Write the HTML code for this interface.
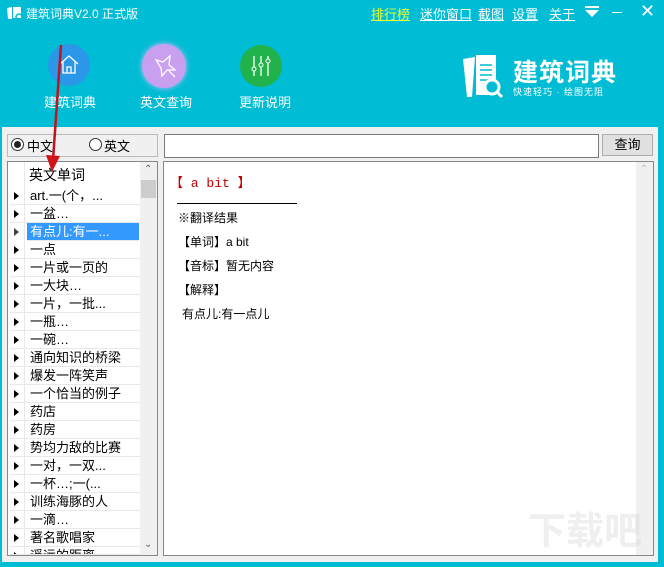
<!DOCTYPE html>
<html style="width:664px;height:567px;overflow:hidden"><head><meta charset="utf-8"><style>
*{margin:0;padding:0;box-sizing:border-box}
body{width:664px;height:567px;overflow:hidden;background:#00bcd4;font-family:"Liberation Sans","Noto Sans CJK SC",sans-serif;position:relative}
.abs{position:absolute}
.t{color:#fff;font-size:13px}
.lnk{color:#fff;font-size:13px;text-decoration:underline}
.lower{left:2px;top:127px;width:656px;height:435px;background:#f0f0f0}
.box{border:1px solid #a0a0a0;background:#fff}
.row{position:absolute;left:10px;width:130px;height:18px;border-bottom:1px solid #e8e8e8;font-size:13px;line-height:18px}
.row i{position:absolute;left:4px;top:5px;width:0;height:0;border-top:4px solid transparent;border-bottom:4px solid transparent;border-left:5px solid #000}
.row span{position:absolute;left:20px;white-space:nowrap}
.r{font-size:12px;position:absolute;left:178px}
</style></head><body>
<svg class="abs" style="left:6px;top:5px" width="18" height="16"><path d="M1 3 L6 2 L6 14 L2 14Z" fill="#fff"/><rect x="7" y="2" width="8" height="11" fill="#fff"/><circle cx="13" cy="12" r="3" fill="none" stroke="#00bcd4" stroke-width="1.5"/></svg>
<div class="abs t" style="left:26px;top:5px;font-size:12px">建筑词典V2.0 正式版</div>
<div class="abs lnk" style="left:371px;top:4px;color:#e5ff3a">排行榜</div>
<div class="abs lnk" style="left:420px;top:4px">迷你窗口</div>
<div class="abs lnk" style="left:478px;top:4px">截图</div>
<div class="abs lnk" style="left:512px;top:4px">设置</div>
<div class="abs lnk" style="left:549px;top:4px">关于</div>
<svg class="abs" style="left:584px;top:6px" width="16" height="12"><rect x="1" y="0" width="14" height="2" fill="#fff"/><path d="M1 4 L15 4 L8 11Z" fill="#fff"/></svg>
<div class="abs" style="left:612px;top:12px;width:10px;height:1px;background:#fff"></div>
<div class="abs t" style="left:640px;top:1px;font-size:18px">✕</div>
<div class="abs" style="left:48px;top:44px;width:42px;height:42px;border-radius:50%;background:#2a97e8"></div>
<svg class="abs" style="left:55px;top:51px" width="28" height="28"><path d="M5 13 L14 5 L23 13 M8 11 V22 H20 V11 M12 22 V16 H16 V22" fill="none" stroke="#fff" stroke-width="1.3"/></svg>
<div class="abs t" style="left:44px;top:92px">建筑词典</div>
<div class="abs" style="left:142px;top:44px;width:44px;height:44px;border-radius:50%;background:#c9a0f0;box-shadow:0 0 6px #d9b9ff"></div>
<svg class="abs" style="left:150px;top:52px" width="30" height="30"><path d="M6 8 L13 10 L20 4 L19 13 L25 18 L17 18 L12 24 L11 16 Z M19 19 L25 25" fill="none" stroke="#fff" stroke-width="1.3"/></svg>
<div class="abs t" style="left:140px;top:92px">英文查询</div>
<div class="abs" style="left:240px;top:45px;width:42px;height:42px;border-radius:50%;background:#21b24b"></div>
<svg class="abs" style="left:247px;top:52px" width="28" height="28"><path d="M7 4V24 M14 4V24 M21 4V24" stroke="#fff" stroke-width="1.3"/><circle cx="7" cy="17" r="2" fill="#21b24b" stroke="#fff"/><circle cx="14" cy="13" r="2" fill="#21b24b" stroke="#fff"/><circle cx="21" cy="9" r="2" fill="#21b24b" stroke="#fff"/></svg>
<div class="abs t" style="left:239px;top:92px">更新说明</div>
<svg class="abs" style="left:460px;top:53px" width="55" height="50"><path d="M3 6 L15 4 L12 44 L7 44Z" fill="#fff"/><rect x="16" y="2" width="20" height="40" fill="#fff"/><g stroke="#00bcd4" stroke-width="1.5"><path d="M20 12H32M20 17H32M20 22H32M20 27H28"/></g><circle cx="32" cy="34" r="7" fill="#00bcd4" stroke="#fff" stroke-width="3"/><path d="M37 39 L42 44" stroke="#fff" stroke-width="3"/></svg>
<div class="abs" style="left:513px;top:53px;color:#fff;font-size:25px;font-weight:bold;letter-spacing:1px;white-space:nowrap">建筑词典</div>
<div class="abs" style="left:513px;top:85px;color:#fff;font-size:9px;letter-spacing:1px;white-space:nowrap">快速轻巧 · 绘图无阻</div>
<div class="abs lower"></div>
<div class="abs" style="left:7px;top:134px;width:151px;height:23px;border:1px solid #bbb;background:#f0f0f0"></div>
<div class="abs" style="left:11px;top:138px;width:13px;height:13px;border:1px solid #333;border-radius:50%;background:#fff"><div style="margin:2px;width:7px;height:7px;border-radius:50%;background:#222"></div></div>
<div class="abs" style="left:27px;top:136px;font-size:13px">中文</div>
<div class="abs" style="left:89px;top:138px;width:13px;height:13px;border:1px solid #333;border-radius:50%;background:#fff"></div>
<div class="abs" style="left:104px;top:136px;font-size:13px">英文</div>
<div class="abs box" style="left:164px;top:134px;width:435px;height:24px;border-color:#7a7a7a"></div>
<div class="abs" style="left:602px;top:134px;width:51px;height:22px;border:1px solid #adadad;background:#e1e1e1;font-size:13px;text-align:center;line-height:20px">查询</div>
<div class="abs box" style="left:7px;top:161px;width:151px;height:395px;border-color:#828790;overflow:hidden">
<div class="abs" style="left:16px;top:0;width:1px;height:395px;background:#e8e8e8"></div>
<div class="abs" style="left:21px;top:3px;font-size:14px">英文单词</div>
<div class="abs" style="left:132px;top:0;width:17px;height:393px;background:#f0f0f0"></div>
<div class="abs" style="left:133px;top:18px;width:15px;height:18px;background:#cdcdcd"></div>
<div class="abs" style="left:136px;top:2px;font-size:10px;color:#606060">⌃</div>
<div class="abs" style="left:136px;top:377px;font-size:10px;color:#606060">⌄</div>
</div>
<div class="abs" style="left:0;top:0">
<div class="row" style="top:187px"><i></i><span>art.一(个，...</span></div>
<div class="row" style="top:205px"><i></i><span>一盆…</span></div>
<div class="row" style="top:223px;background:#3399ff;color:#fff;left:27px;width:112px"><span style="left:3px">有点儿:有一...</span></div>
<div class="row" style="top:223px;width:14px;border:none"><i style="border-left-color:#444"></i></div>
<div class="row" style="top:241px"><i></i><span>一点</span></div>
<div class="row" style="top:259px"><i></i><span>一片或一页的</span></div>
<div class="row" style="top:277px"><i></i><span>一大块…</span></div>
<div class="row" style="top:295px"><i></i><span>一片，一批...</span></div>
<div class="row" style="top:313px"><i></i><span>一瓶…</span></div>
<div class="row" style="top:331px"><i></i><span>一碗…</span></div>
<div class="row" style="top:349px"><i></i><span>通向知识的桥梁</span></div>
<div class="row" style="top:367px"><i></i><span>爆发一阵笑声</span></div>
<div class="row" style="top:385px"><i></i><span>一个恰当的例子</span></div>
<div class="row" style="top:403px"><i></i><span>药店</span></div>
<div class="row" style="top:421px"><i></i><span>药房</span></div>
<div class="row" style="top:439px"><i></i><span>势均力敌的比赛</span></div>
<div class="row" style="top:457px"><i></i><span>一对，一双...</span></div>
<div class="row" style="top:475px"><i></i><span>一杯…;一(...</span></div>
<div class="row" style="top:493px"><i></i><span>训练海豚的人</span></div>
<div class="row" style="top:511px"><i></i><span>一滴…</span></div>
<div class="row" style="top:529px"><i></i><span>著名歌唱家</span></div>
<div class="row" style="top:547px;height:8px;overflow:hidden"><i></i><span>遥远的距离</span></div>
</div>
<div class="abs box" style="left:163px;top:161px;width:491px;height:395px;border-color:#828790">
<div class="abs" style="left:472px;top:0;width:17px;height:393px;background:#f0f0f0"></div>
<div class="abs" style="left:476px;top:2px;font-size:10px;color:#bbb">⌃</div>
</div>
<div class="abs" style="left:170px;top:172px;font-size:13px;color:#c00000;font-family:'Liberation Mono','Noto Sans CJK SC',monospace">【 a bit 】</div>
<div class="abs" style="left:177px;top:203px;width:120px;height:1px;background:#000"></div>
<div class="r" style="top:209px">※翻译结果</div>
<div class="r" style="top:233px">【单词】a bit</div>
<div class="r" style="top:257px">【音标】暂无内容</div>
<div class="r" style="top:281px">【解释】</div>
<div class="r" style="top:305px;left:182px">有点儿:有一点儿</div>
<div class="abs" style="left:528px;top:512px;font-size:38px;line-height:40px;color:rgba(210,210,210,.35);font-weight:bold;white-space:nowrap">下载吧</div>
<svg class="abs" style="left:0;top:0" width="120" height="200"><path d="M61 45 L53 160" stroke="#c0141a" stroke-width="2.5"/><path d="M46 155 L52 172 L60 156Z" fill="#d0141a"/></svg>
</body></html>
